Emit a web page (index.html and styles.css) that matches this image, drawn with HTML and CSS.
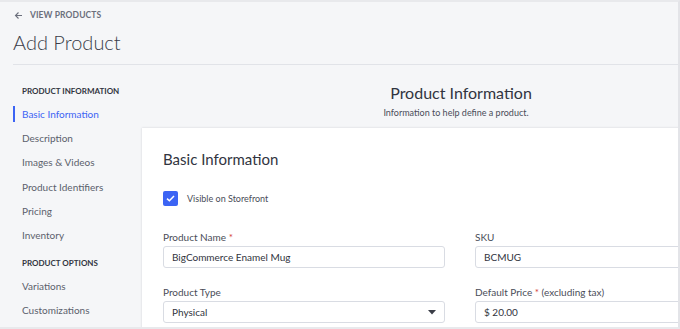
FILE: index.html
```html
<!DOCTYPE html>
<html lang="en">
<head>
  <meta charset="UTF-8">
  <title>Add Product</title>
  <link rel="stylesheet" href="styles.css">
</head>
<body>
  <div class="frame">
    <div class="header">
      <a class="back" href="#">
        <svg width="9" height="9" viewBox="0 0 9 9"><path d="M8 4.5H1.5M4.5 1.5L1.5 4.5L4.5 7.5" fill="none" stroke="#6b6f7c" stroke-width="1.1"/></svg>
        <span>View Products</span>
      </a>
      <h1 class="page-title">Add Product</h1>
    </div>
    <div class="content">
      <div class="sidebar">
        <div class="nav-group">Product Information</div>
        <a class="nav-item active" href="#">Basic Information</a>
        <a class="nav-item" href="#">Description</a>
        <a class="nav-item" href="#">Images &amp; Videos</a>
        <a class="nav-item" href="#">Product Identifiers</a>
        <a class="nav-item" href="#">Pricing</a>
        <a class="nav-item" href="#">Inventory</a>
        <div class="nav-group">Product Options</div>
        <a class="nav-item" href="#">Variations</a>
        <a class="nav-item" href="#">Customizations</a>
      </div>
      <div class="main">
        <div class="intro">
          <h2 class="intro-title">Product Information</h2>
          <p class="intro-sub">Information to help define a product.</p>
        </div>
        <div class="card">
          <h3 class="card-title">Basic Information</h3>
          <label class="check">
            <span class="box">
              <svg width="9" height="7" viewBox="0 0 9 7"><path d="M1 3.6L3.4 5.8L8 1" fill="none" stroke="#fff" stroke-width="1.5"/></svg>
            </span>
            <span>Visible on Storefront</span>
          </label>
          <div class="fields">
            <div class="field">
              <div class="label">Product Name <span class="req">*</span></div>
              <div class="input">BigCommerce Enamel Mug</div>
            </div>
            <div class="field">
              <div class="label">SKU</div>
              <div class="input">BCMUG</div>
            </div>
            <div class="field">
              <div class="label">Product Type</div>
              <div class="input select">
                <span>Physical</span>
                <svg width="8" height="5" viewBox="0 0 8 5"><path d="M0 0H8L4 4.5Z" fill="#3a3d47"/></svg>
              </div>
            </div>
            <div class="field">
              <div class="label">Default Price <span class="req">*</span> (excluding tax)</div>
              <div class="input">$ 20.00</div>
            </div>
          </div>
        </div>
      </div>
    </div>
  </div>
</body>
</html>
```

FILE: styles.css
```css
html, body {
  margin: 0;
  padding: 0;
}
body {
  font-family: Lato, "Liberation Sans", sans-serif;
  color: #313440;
  background: #fff;
}
a {
  text-decoration: none;
}
.frame {
  width: 680px;
  height: 329px;
  box-sizing: border-box;
  overflow: hidden;
  background: #f5f6f8;
  border-top: 2px solid #e8e9ec;
  border-right: 2px solid #e3e4e8;
  border-bottom: 2px solid #e8e9ec;
}
.header {
  margin-left: 13px;
  border-bottom: 1px solid #e1e3e8;
  height: 62px;
}
.back {
  display: flex;
  align-items: center;
  gap: 7px;
  padding-top: 8px;
  height: 10px;
  font-size: 8.5px;
  font-weight: 700;
  text-transform: uppercase;
  color: #6b6f7c;
  letter-spacing: 0.1px;
}
.back svg {
  margin-left: 1px;
}
.page-title {
  margin: 11px 0 0;
  font-size: 20px;
  font-weight: 300;
  line-height: 22px;
  color: #3a3d48;
}
.content {
  display: flex;
}
.sidebar {
  width: 129px;
  flex-shrink: 0;
  margin-left: 13px;
  padding-top: 20px;
}
.nav-group {
  padding-left: 9px;
  font-size: 8px;
  font-weight: 700;
  text-transform: uppercase;
  color: #313440;
  height: 12px;
  line-height: 12px;
  margin-bottom: 9px;
}
.nav-item {
  display: block;
  padding-left: 9px;
  height: 16px;
  line-height: 16px;
  margin-bottom: 8.2px;
  font-size: 10px;
  color: #5b5f6c;
}
.nav-item + .nav-group {
  margin-top: 13.8px;
}
.nav-item.active {
  color: #3c64f4;
  border-left: 2px solid #3c64f4;
  padding-left: 7px;
}
.main {
  width: 638px;
  flex-shrink: 0;
}
.intro {
  text-align: center;
  padding-top: 18px;
  height: 45px;
}
.intro-title {
  margin: 0;
  font-size: 16px;
  font-weight: 400;
  line-height: 20px;
}
.intro-sub {
  margin: 4px 0 0;
  padding-right: 10px;
  font-size: 9px;
  line-height: 12px;
  color: #4a4d58;
}
.card {
  background: #fff;
  box-shadow: 0 0 2px rgba(40, 45, 60, 0.18);
  padding: 22px 21px 20px;
  height: 220px;
}
.card-title {
  margin: 0;
  font-size: 15px;
  font-weight: 400;
  line-height: 18px;
}
.check {
  display: flex;
  align-items: center;
  gap: 9px;
  margin-top: 23px;
  font-size: 9px;
  color: #4a4d58;
}
.box {
  width: 15px;
  height: 15px;
  background: #3c64f4;
  border-radius: 2px;
  display: flex;
  align-items: center;
  justify-content: center;
}
.fields {
  display: grid;
  grid-template-columns: 282px 282px;
  column-gap: 30px;
  row-gap: 18px;
  margin-top: 25px;
}
.label {
  font-size: 10px;
  line-height: 12px;
  color: #4a4d58;
  margin-bottom: 3px;
}
.req {
  color: #d4403a;
}
.input {
  height: 22px;
  box-sizing: border-box;
  border: 1px solid #d9dce3;
  border-radius: 3px;
  padding: 0 8px;
  display: flex;
  align-items: center;
  font-size: 10px;
  color: #313440;
}
.select {
  justify-content: space-between;
  padding-right: 8px;
}
```
